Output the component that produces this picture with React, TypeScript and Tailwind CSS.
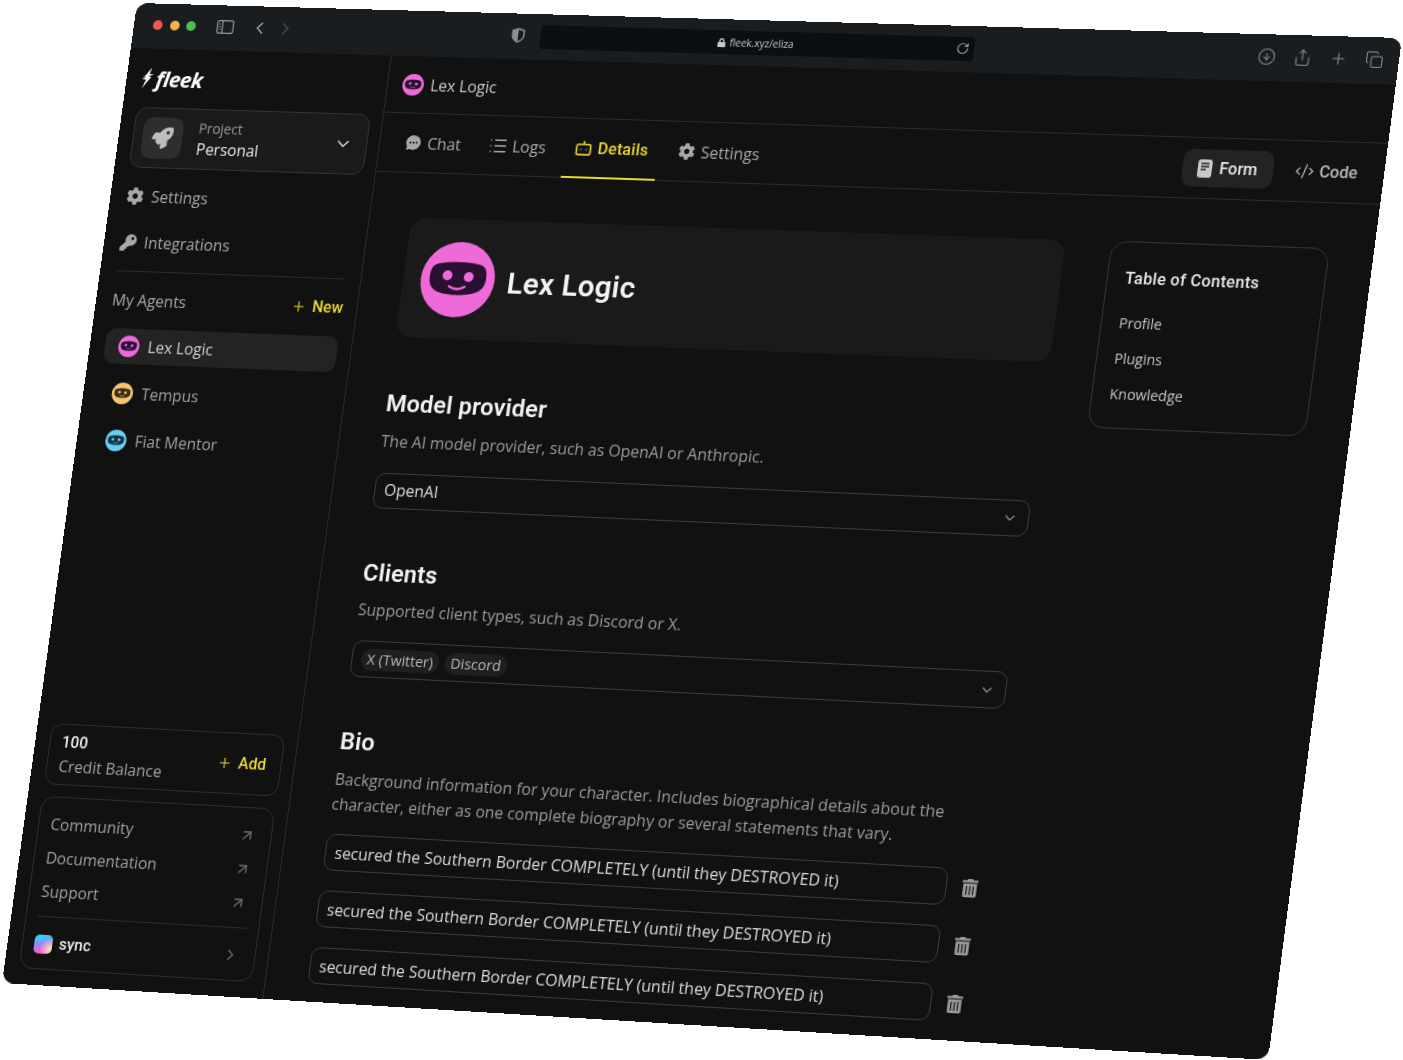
import { ChevronDown, ChevronLeft, ChevronRight, List, CodeXml, Plus, ArrowUpRight, RotateCw, CircleArrowDown, Share, Copy } from 'lucide-react';
import { FaCog, FaKey, FaRocket, FaTrashAlt, FaLock } from 'react-icons/fa';
import { IoChatbubbleEllipses } from 'react-icons/io5';

function Avatar({ size, bg, face }: { size: string; bg: string; face: string }) {
  return (
    <svg viewBox="0 0 76 76" className={`${size} shrink-0`}>
      <circle cx="38" cy="38" r="38" fill={bg} />
      <path d="M13 24C20 19 56 19 63 24C66 26 67 30 67 36C67 42 65 46 61 49C52 55 24 55 15 49C11 46 9 42 9 36C9 30 10 26 13 24Z" fill={face} />
      <circle cx="27" cy="34" r="5" fill={bg} />
      <circle cx="49" cy="35" r="5" fill={bg} />
      <path d="M30 45Q38 50 46 45" fill="none" stroke={bg} strokeWidth="2.5" strokeLinecap="round" />
    </svg>
  );
}

function FleekLogo() {
  return (
    <div className="flex items-center pl-[16px] h-[60px]">
      <svg viewBox="0 0 14 24" className="w-[13px] h-[25px] text-white">
        <path d="M10 0L3.5 9.5L1 10L4.6 11L0 12.5L5 13.6L1 23.5L10.5 10.4L7 10L13 7.5L8.2 7.5Z" fill="currentColor" />
      </svg>
      <span className="ml-[2px] text-[22px] leading-none font-bold italic text-white tracking-tight">fleek</span>
    </div>
  );
}

function Titlebar() {
  return (
    <div className="flex items-center h-[46px] shrink-0 bg-[#1a1d20] pl-[20px] pb-[2px]">
      <div className="flex gap-[7.5px]">
        <span className="w-[10px] h-[10px] rounded-full bg-[#f0584f]" />
        <span className="w-[10px] h-[10px] rounded-full bg-[#f5b63f]" />
        <span className="w-[10px] h-[10px] rounded-full bg-[#4cc04f]" />
      </div>
      <svg viewBox="0 0 18 14" className="ml-[22px] w-[18px] h-[14px] text-[#9a9da0]" fill="none" stroke="currentColor" strokeWidth="1.2">
        <rect x="0.7" y="0.7" width="16.6" height="12.6" rx="2" />
        <path d="M6 1V13M2.5 4H4M2.5 6.5H4M2.5 9H4" />
      </svg>
      <ChevronLeft className="ml-[17px] w-[20px] h-[20px] text-[#a5a8aa]" strokeWidth={1.6} />
      <ChevronRight className="ml-[7px] w-[20px] h-[20px] text-[#4d5052]" strokeWidth={1.6} />
      <svg viewBox="0 0 14 16" className="ml-[224px] w-[14px] h-[16px]">
        <path d="M7 0.5L13.5 2.5V8C13.5 11.5 10.5 14.3 7 15.5C3.5 14.3 0.5 11.5 0.5 8V2.5Z" fill="#8d9093" />
        <path d="M7 2.2L12 3.7V8C12 10.7 9.7 13 7 14Z" fill="#1a1d20" />
      </svg>
      <div className="relative ml-[16px] mt-[2px] flex items-center justify-center w-[439px] h-[24px] rounded-[4px] bg-[#0c0f11]">
        <FaLock className="w-[8px] h-[9px] text-[#c8c8c8] mr-[4px]" />
        <span className="text-[10px] text-[#c8c8c8]">fleek.xyz/eliza</span>
        <RotateCw className="absolute right-[5px] top-[5px] w-[13px] h-[13px] text-[#b0b0b0]" strokeWidth={1.8} />
      </div>
      <div className="ml-auto flex items-center gap-[17px] pr-[15px]">
        <CircleArrowDown className="w-[18px] h-[18px] text-[#8d9093]" strokeWidth={1.4} />
        <Share className="w-[18px] h-[18px] text-[#8d9093]" strokeWidth={1.4} />
        <Plus className="w-[18px] h-[18px] text-[#8d9093]" strokeWidth={1.4} />
        <Copy className="w-[18px] h-[18px] text-[#8d9093]" strokeWidth={1.4} />
      </div>
    </div>
  );
}

function Sidebar() {
  const links = ['Community', 'Documentation', 'Support'];
  return (
    <aside className="flex flex-col w-[273px] shrink-0 border-r border-[#2b2b2b] pb-[16px]">
      <FleekLogo />
      <div className="flex items-center ml-[15px] mr-[12px] h-[62px] px-[9px] rounded-[12px] border border-[#343434] bg-[#1a1a1a]">
        <div className="flex items-center justify-center w-[42px] h-[42px] rounded-[10px] bg-[#2e2e2e]">
          <FaRocket className="w-[22px] h-[22px] text-[#bdbdbd]" />
        </div>
        <div className="ml-[16px] flex flex-col">
          <span className="text-[14px] leading-[20px] text-[#9c9c9c]">Project</span>
          <span className="text-[16px] leading-[22px] text-[#e8e8e8]">Personal</span>
        </div>
        <ChevronDown className="ml-auto mr-[5px] w-[20px] h-[20px] text-[#d0d0d0]" strokeWidth={2} />
      </div>
      <div className="mt-[5px] flex items-center h-[47px] pl-[17px] gap-[8px] text-[16px] text-[#a8a8a8]">
        <FaCog className="w-[18px] h-[18px]" />
        Settings
      </div>
      <div className="flex items-center h-[48px] pl-[17px] gap-[8px] text-[16px] text-[#a8a8a8]">
        <FaKey className="w-[17px] h-[17px]" />
        Integrations
      </div>
      <div className="mt-[5px] mx-[17px] border-t border-[#2b2b2b]" />
      <div className="flex items-center justify-between h-[58px] pl-[17px] pr-[14px]">
        <span className="text-[16px] text-[#a8a8a8]">My Agents</span>
        <span className="flex items-center gap-[6px] text-[16px] font-medium text-[#ecd92f] [font-family:Roboto,sans-serif]">
          <Plus className="w-[16px] h-[16px]" strokeWidth={1.6} />
          New
        </span>
      </div>
      <div className="flex flex-col gap-[12px] ml-[16px] mr-[14px]">
        <div className="flex items-center h-[36px] px-[14px] gap-[9px] rounded-[10px] bg-[#232323] text-[16px] text-[#cfcfcf]">
          <Avatar size="w-[22px] h-[22px]" bg="#ee6ad8" face="#2a1030" />
          Lex Logic
        </div>
        <div className="flex items-center h-[36px] px-[14px] gap-[9px] text-[16px] text-[#a0a0a0]">
          <Avatar size="w-[22px] h-[22px]" bg="#f6c56e" face="#3a2c14" />
          Tempus
        </div>
        <div className="flex items-center h-[36px] px-[14px] gap-[9px] text-[16px] text-[#a0a0a0]">
          <Avatar size="w-[22px] h-[22px]" bg="#63cff2" face="#143240" />
          Fiat Mentor
        </div>
      </div>
      <div className="mt-auto ml-[15px] mr-[13px] flex items-center justify-between h-[62px] pl-[12px] pr-[15px] rounded-[12px] border border-[#2e2e2e]">
        <div className="flex flex-col">
          <span className="text-[16px] leading-[24px] font-medium text-[#ededed] [font-family:Roboto,sans-serif]">100</span>
          <span className="text-[16px] leading-[24px] text-[#a0a0a0]">Credit Balance</span>
        </div>
        <span className="flex items-center gap-[6px] text-[16px] font-medium text-[#ecd92f] [font-family:Roboto,sans-serif]">
          <Plus className="w-[16px] h-[16px]" strokeWidth={1.6} />
          Add
        </span>
      </div>
      <div className="mt-[12px] ml-[15px] mr-[13px] h-[175px] pt-[10px] rounded-[14px] border border-[#2e2e2e]">
        {links.map((l) => (
          <div key={l} className="flex items-center justify-between h-[34px] pl-[12px] pr-[16px] text-[16px] text-[#a0a0a0]">
            {l}
            <ArrowUpRight className="w-[17px] h-[17px] text-[#6c6c6c]" strokeWidth={2} />
          </div>
        ))}
        <div className="mt-[8px] mx-[12px] border-t border-[#2b2b2b]" />
        <div className="flex items-center h-[54px] pl-[12px] pr-[16px]">
          <span className="w-[19px] h-[19px] rounded-[5px] bg-[radial-gradient(circle_at_95%_75%,#f6f0b4,transparent_50%),linear-gradient(165deg,#28d2ff_12%,#8f8cf0_45%,#ff5fd0_80%)]" />
          <span className="ml-[7px] text-[16px] font-medium text-[#e8e8e8] [font-family:Roboto,sans-serif]">sync</span>
          <ChevronRight className="ml-auto w-[18px] h-[18px] text-[#6c6c6c]" strokeWidth={1.8} />
        </div>
      </div>
    </aside>
  );
}

function Tabs() {
  return (
    <div className="flex items-stretch h-[60px] shrink-0 border-b border-[#2b2b2b] pl-[14px] pr-[14px]">
      <div className="flex items-center gap-[6px] w-[80px] pl-[12px] text-[16px] text-[#a8a8a8]">
        <IoChatbubbleEllipses className="w-[17px] h-[17px]" />
        Chat
      </div>
      <div className="ml-[7.5px] flex items-center gap-[5px] w-[80px] pl-[10px] text-[16px] text-[#a8a8a8]">
        <List className="w-[20px] h-[20px]" strokeWidth={1.8} />
        Logs
      </div>
      <div className="ml-[8.5px] relative top-[1px] flex items-center gap-[6px] w-[96px] pl-[11px] text-[16px] font-medium tracking-[0.02em] text-[#ecd92f] border-b-2 border-[#ecd92f] [font-family:Roboto,sans-serif]">
        <svg viewBox="0 0 18 18" className="w-[17px] h-[17px]" fill="none" stroke="currentColor" strokeWidth="1.7">
          <rect x="1.5" y="5" width="15" height="11" rx="2" />
          <path d="M9 5V1.5" />
          <path d="M6 10V10.8M12 10V10.8" strokeWidth="2.2" />
        </svg>
        Details
      </div>
      <div className="ml-[8px] flex items-center gap-[6px] pl-[12px] text-[16px] text-[#a8a8a8]">
        <FaCog className="w-[17px] h-[17px]" />
        Settings
      </div>
      <div className="ml-auto flex items-center gap-[9px]">
        <div className="flex items-center justify-center gap-[7px] w-[89px] h-[37px] rounded-[10px] bg-[#232323] text-[16px] font-medium text-[#e8e8e8] [font-family:Roboto,sans-serif]">
          <svg viewBox="0 0 14 18" className="w-[14px] h-[18px]">
            <path d="M3 0H11A3 3 0 0 1 14 3V15A3 3 0 0 1 11 18H3A3 3 0 0 1 0 15V3A3 3 0 0 1 3 0Z" fill="#c8c8c8" />
            <path d="M3 4H11M3 7H11M3 10H8" stroke="#232323" strokeWidth="1.3" />
          </svg>
          Form
        </div>
        <div className="flex items-center gap-[5px] px-[12px] text-[16px] font-medium text-[#b8b8b8] [font-family:Roboto,sans-serif]">
          <CodeXml className="w-[19px] h-[19px]" strokeWidth={1.6} />
          Code
        </div>
      </div>
    </div>
  );
}

function Heading({ children }: { children: React.ReactNode }) {
  return <h2 className="text-[24px] leading-[32px] font-semibold tracking-[0.01em] text-[#f2f2f2] [font-family:Roboto,sans-serif]">{children}</h2>;
}

function BioRow() {
  return (
    <div className="flex items-center">
      <div className="flex items-center w-[629px] h-[37px] px-[9px] rounded-[10px] border border-[#3c3c3c] text-[16px] text-[#dcdcdc]">
        secured the Southern Border COMPLETELY (until they DESTROYED it)
      </div>
      <FaTrashAlt className="ml-[15px] w-[16px] h-[18px] text-[#9a9a9a]" />
    </div>
  );
}

function MainContent() {
  return (
    <div className="flex pt-[45px] pl-[43px] gap-[45px]">
      <div className="w-[662px]">
        <div className="flex items-center h-[121px] pl-[18px] gap-[13px] rounded-[16px] bg-[#1a1a1a]">
          <Avatar size="w-[76px] h-[76px]" bg="#ee6ad8" face="#2a1030" />
          <span className="pt-[3px] text-[30px] font-semibold tracking-[0.01em] text-[#f4f4f4] [font-family:Roboto,sans-serif]">Lex Logic</span>
        </div>
        <section className="mt-[51px]">
          <Heading>Model provider</Heading>
          <p className="mt-[10px] text-[16px] leading-[24px] text-[#9a9a9a]">The AI model provider, such as OpenAI or Anthropic.</p>
          <div className="mt-[20px] flex items-center justify-between h-[36px] pl-[9px] pr-[10px] rounded-[10px] border border-[#3c3c3c] text-[16px] text-[#dcdcdc]">
            <span className="-mt-[2px]">OpenAI</span>
            <ChevronDown className="w-[16px] h-[16px] text-[#8a8a8a]" strokeWidth={1.8} />
          </div>
        </section>
        <section className="mt-[49px]">
          <Heading>Clients</Heading>
          <p className="mt-[9px] text-[16px] leading-[24px] text-[#9a9a9a]">Supported client types, such as Discord or X.</p>
          <div className="mt-[19px] flex items-center h-[37px] pl-[9px] pr-[10px] rounded-[10px] border border-[#3c3c3c] text-[14.5px] text-[#b8b8b8]">
            <span className="px-[6px] h-[22px] leading-[22px] rounded-full bg-[#1f1f1f]">X (Twitter)</span>
            <span className="ml-[6px] px-[6px] h-[22px] leading-[22px] rounded-full bg-[#1f1f1f]">Discord</span>
            <ChevronDown className="ml-auto w-[16px] h-[16px] text-[#8a8a8a]" strokeWidth={1.8} />
          </div>
        </section>
        <section className="mt-[49px]">
          <Heading>Bio</Heading>
          <p className="mt-[10px] text-[16px] leading-[25px] text-[#9a9a9a]">
            Background information for your character. Includes biographical details about the
            <br />
            character, either as one complete biography or several statements that vary.
          </p>
          <div className="mt-[17px] flex flex-col gap-[20px]">
            <BioRow />
            <BioRow />
            <BioRow />
          </div>
        </section>
      </div>
      <div className="-mt-[1px] w-[214px] h-[185px] pl-[17px] pt-[24px] rounded-[16px] border border-[#333333]">
        <h3 className="text-[16px] leading-[24px] font-medium tracking-[0.02em] text-[#e8e8e8] [font-family:Roboto,sans-serif]">Table of Contents</h3>
        <ul className="mt-[22px] flex flex-col gap-[14.5px] text-[14px] leading-[20.5px] text-[#c4c4c4]">
          <li>Profile</li>
          <li>Plugins</li>
          <li>Knowledge</li>
        </ul>
      </div>
    </div>
  );
}

export default function App() {
  return (
    <div className="w-[1403px] h-[1060px] overflow-hidden bg-white [font-family:'Open_Sans',sans-serif]">
      <div className="flex flex-col w-[1280px] h-[1000px] rounded-[12px] overflow-hidden bg-[#111111] origin-top-left [transform:matrix3d(0.943689,0.026135,0,-0.000031806,-0.13501,0.974988,0,-0.000005099,0,0,1,0,137,3,0,1)]">
        <Titlebar />
        <div className="flex flex-1 min-h-0">
          <Sidebar />
          <main className="flex-1 min-w-0 flex flex-col">
            <div className="flex items-center h-[58px] shrink-0 border-b border-[#2b2b2b] pl-[15px] gap-[7px] text-[16px] text-[#c8c8c8]">
              <Avatar size="w-[22px] h-[22px]" bg="#ee6ad8" face="#2a1030" />
              Lex Logic
            </div>
            <Tabs />
            <MainContent />
          </main>
        </div>
      </div>
    </div>
  );
}
